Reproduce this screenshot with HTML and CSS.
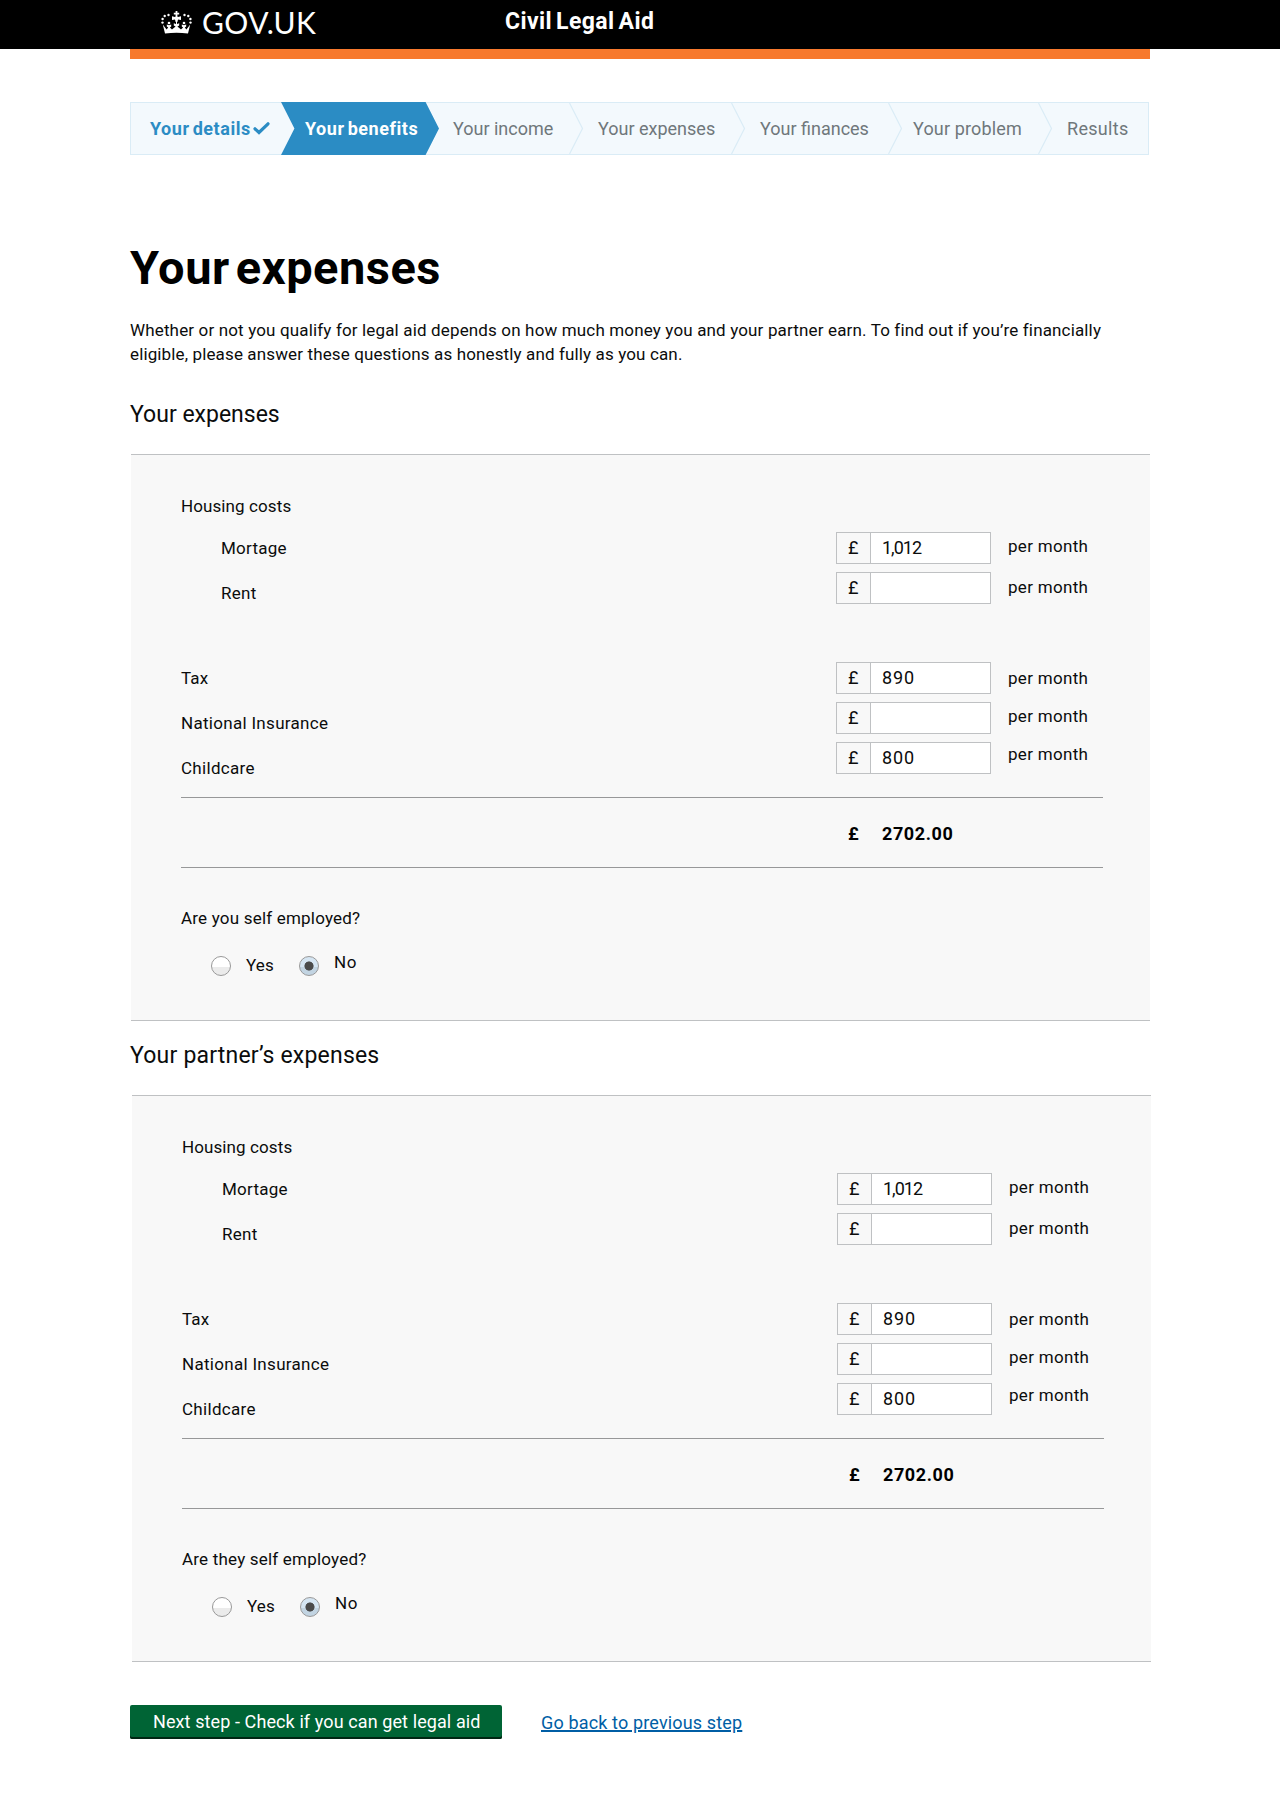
FILE: index.html
```html
<!DOCTYPE html>
<html lang="en">
<head>
<meta charset="utf-8">
<title>Civil Legal Aid - Your expenses</title>
<link rel="stylesheet" href="styles.css">
</head>
<body>
<header class="masthead">
  <div class="masthead-inner">
    <a class="logo">
      <svg class="crown" width="31" height="23" viewBox="0 0 31 23" fill="#fff">
        <path d="M4 22.600L1.800 13.600L5.600 18.600L7.200 16.400L5.800 15.600V13.400L8 14.200L10.200 13.400V15.600L8.900 16.400L11 18.400L14.600 15.400L12.800 14.400V12.200L15 13V9.600H16V13L18.200 12.200V14.400L16.400 15.400L20 18.400L22.100 16.400L20.800 15.600V13.400L23 14.200L25.200 13.400V15.600L23.800 16.400L25.400 18.600L29.200 13.600L27 22.600Q15.500 20.800 4 22.600Z"/>
        <path d="M14.600 0H16.400V1.800H18.200V3.600H16.400V5.200H14.600V3.600H12.800V1.800H14.600Z"/>
        <path d="M15.500 4.600L17 6L20 5.200V9L17 8.400L16.400 11H14.600L14 8.400L11 9V5.200L14 6Z"/>
        <circle cx="7.500" cy="4" r="1.200"/><circle cx="23.500" cy="4" r="1.200"/>
        <circle cx="3.700" cy="5" r="1.200"/><circle cx="27.300" cy="5" r="1.200"/>
        <circle cx="1.600" cy="8" r="1.200"/><circle cx="29.400" cy="8" r="1.200"/>
        <circle cx="1.500" cy="11.600" r="1.200"/><circle cx="29.500" cy="11.600" r="1.200"/>
        <circle cx="8" cy="12" r="1.300"/><circle cx="23" cy="12" r="1.300"/>
      </svg>
      <span class="logo-text">GOV.UK</span>
    </a>
    <span class="service">Civil Legal Aid</span>
  </div>
</header>
<div class="page">
  <div class="accent"></div>
  <ol class="steps">
    <li class="step done">Your details<svg class="tick" width="17" height="13" viewBox="0 0 17 13"><path d="M2 6.800L6 10.500L15 1.800" fill="none" stroke="#2b8cc4" stroke-width="3.200" stroke-linecap="round"/></svg></li>
    <li class="step current">Your benefits</li>
    <li class="step income">Your income<svg class="chevron" width="15" height="51" viewBox="0 0 15 51"><path d="M.5 0L13.500 25.500L.5 51"/></svg></li>
    <li class="step expenses">Your expenses<svg class="chevron" width="15" height="51" viewBox="0 0 15 51"><path d="M.5 0L13.500 25.500L.5 51"/></svg></li>
    <li class="step finances">Your finances<svg class="chevron" width="15" height="51" viewBox="0 0 15 51"><path d="M.5 0L13.500 25.500L.5 51"/></svg></li>
    <li class="step problem">Your problem<svg class="chevron" width="15" height="51" viewBox="0 0 15 51"><path d="M.5 0L13.500 25.500L.5 51"/></svg></li>
    <li class="step results">Results</li>
  </ol>
  <h1>Your expenses</h1>
  <p class="intro"><span class="intro-first">Whether or not you qualify for legal aid depends on how much money you and your partner earn. To find out if you’re financially</span><br>eligible, please answer these questions as honestly and fully as you can.</p>

  <h2>Your expenses</h2>
  <section class="panel">
    <div class="costs">
      <div class="labels">
        <div class="label">Housing costs</div>
        <div class="label nested">Mortage</div>
        <div class="label nested">Rent</div>
        <div class="label group">Tax</div>
        <div class="label wide">National Insurance</div>
        <div class="label wide">Childcare</div>
      </div>
      <div class="fields">
        <div class="money"><span>£</span><b class="one">1,012</b></div>
        <div class="money"><span>£</span><b></b></div>
        <div class="money group"><span>£</span><b>890</b></div>
        <div class="money"><span>£</span><b></b></div>
        <div class="money"><span>£</span><b>800</b></div>
      </div>
      <div class="units">
        <div>per month</div>
        <div>per month</div>
        <div>per month</div>
        <div>per month</div>
        <div>per month</div>
      </div>
    </div>
    <div class="total"><span>£</span><span class="sum">2702.00</span></div>
    <div class="question">Are you self employed?</div>
    <div class="choices">
      <span class="radio"></span><span class="yes">Yes</span>
      <span class="radio on"></span><span class="no">No</span>
    </div>
  </section>

  <h2 class="partner">Your partner’s expenses</h2>
  <section class="panel shifted">
    <div class="costs">
      <div class="labels">
        <div class="label">Housing costs</div>
        <div class="label nested">Mortage</div>
        <div class="label nested">Rent</div>
        <div class="label group">Tax</div>
        <div class="label wide">National Insurance</div>
        <div class="label wide">Childcare</div>
      </div>
      <div class="fields">
        <div class="money"><span>£</span><b class="one">1,012</b></div>
        <div class="money"><span>£</span><b></b></div>
        <div class="money group"><span>£</span><b>890</b></div>
        <div class="money"><span>£</span><b></b></div>
        <div class="money"><span>£</span><b>800</b></div>
      </div>
      <div class="units">
        <div>per month</div>
        <div>per month</div>
        <div>per month</div>
        <div>per month</div>
        <div>per month</div>
      </div>
    </div>
    <div class="total"><span>£</span><span class="sum">2702.00</span></div>
    <div class="question">Are they self employed?</div>
    <div class="choices">
      <span class="radio"></span><span class="yes">Yes</span>
      <span class="radio on"></span><span class="no">No</span>
    </div>
  </section>

  <div class="actions">
    <a class="button">Next step - Check if you can get legal aid</a>
    <a class="back">Go back to previous step</a>
  </div>
</div>
</body>
</html>
```
FILE: styles.css
```css
* { box-sizing: border-box; }
body {
  margin: 0;
  min-height: 1800px;
  background: #fff;
  color: #0b0c0c;
  font: 17px/24px Roboto, "Liberation Sans", sans-serif;
  white-space: nowrap;
}
.masthead { height: 49px; background: #000; color: #fff; }
.masthead-inner { display: flex; width: 1020px; margin: 0 auto; padding-left: 31px; }
.logo { display: flex; width: 344px; padding-top: 11px; }
.logo-text { margin: -1px 0 0 10px; font: 30px/24px Lato, sans-serif; letter-spacing: 0.4px; }
.service { padding-top: 8px; font-size: 23px; line-height: 28px; font-weight: 700; letter-spacing: 0.4px; word-spacing: -2px; }
.page { width: 1020px; margin: 0 auto; }
.accent { height: 10px; background: #f7792d; }

.steps {
  display: flex;
  width: 1019px;
  height: 53px;
  margin: 43px 0 0;
  padding: 0;
  list-style: none;
  background: #f3f9fd;
  border: 1px solid #daecf6;
  font-size: 18px;
  line-height: 51px;
  color: #6f777b;
}
.step { display: flex; justify-content: space-between; }
.done { width: 150px; padding-left: 19px; justify-content: flex-start; color: #2b8cc4; font-weight: 700; letter-spacing: 0.55px; word-spacing: -2px; }
.tick { margin: 19px 0 0 2px; }
.current {
  width: 158px;
  height: 53px;
  margin-top: -1px;
  padding-left: 24px;
  line-height: 53px;
  background: #2b8cc4;
  color: #fff;
  font-weight: 700;
  letter-spacing: 0.55px;
  word-spacing: -2px;
  clip-path: polygon(0 0, 91.500% 0, 100% 50%, 91.500% 100%, 0 100%, 8.500% 50%);
}
.income { width: 145px; padding-left: 14px; }
.expenses { width: 162px; padding-left: 14px; }
.finances { width: 157px; padding-left: 14px; }
.problem { width: 150px; padding-left: 10px; letter-spacing: 0.15px; }
.results { padding-left: 14px; letter-spacing: 0.3px; }
.chevron { fill: none; stroke: #daecf6; stroke-width: 1.200; }

h1 { margin: 68px 0 0; font-size: 47px; line-height: 90px; font-weight: 700; letter-spacing: 0.5px; word-spacing: -6px; color: #000; }
.intro { margin: 5px 0 0; letter-spacing: 0.130px; }
.intro-first { letter-spacing: 0.150px; }
h2 { margin: 22px 0 0; font-size: 23px; line-height: 54px; font-weight: 400; }
.panel {
  width: 1019px;
  height: 567px;
  margin: 12px 0 0 1px;
  padding: 0 47px 0 50px;
  background: #f8f8f8;
  border: solid #bfc1c3;
  border-width: 1px 0;
}
.costs { display: flex; height: 342px; }
.labels { width: 655px; padding-top: 39px; }
.label { margin-bottom: 21px; letter-spacing: 0.1px; }
.label:first-child { margin-bottom: 18px; }
.label.group { margin-top: 61px; }
.label.nested { padding-left: 40px; letter-spacing: 0.25px; }
.label.wide { letter-spacing: 0.3px; }
.fields { width: 172px; padding-top: 77px; }
.money { display: flex; width: 155px; height: 32px; margin-bottom: 8px; border: 1px solid #bfc1c3; line-height: 30px; }
.money.group { margin-top: 58px; }
.money span { width: 34px; padding-left: 11px; border-right: 1px solid #bfc1c3; font-size: 18px; }
.money b { flex: 1; padding-left: 11px; background: #fff; font-weight: 400; font-size: 18px; letter-spacing: 0.9px; }
.money .one { letter-spacing: -1px; }
.units { padding-top: 79px; letter-spacing: 0.3px; }
.units div { margin-bottom: 14px; }
.units div:nth-child(2) { margin: 17px 0 67px; }
.total {
  display: flex;
  width: 922px;
  height: 71px;
  padding-left: 667px;
  border: solid #979899;
  border-width: 1px 0;
  line-height: 71px;
  font-size: 18px;
  font-weight: 700;
  color: #000;
}
.total span:first-child { width: 34px; }
.sum { letter-spacing: 0.6px; }
.question { margin-top: 38px; letter-spacing: 0.2px; }
.choices { display: flex; margin: 24px 0 0 41px; height: 30px; }
.radio {
  width: 20px;
  height: 20px;
  margin-top: 2px;
  margin-left: -11px;
  border: 1px solid #999;
  border-radius: 50%;
  background: linear-gradient(#fff 55%, #ebebeb 55%);
}
.radio.on { margin-left: 0; background: radial-gradient(circle at 50% 50%, #4a4a4a 4.200px, transparent 4.900px), linear-gradient(#d5e5f2 55%, #c2d4e2 55%); }
.yes { width: 53px; margin: -1px 0 0 15px; letter-spacing: 0.2px; }
.no { margin: -4px 0 0 15px; letter-spacing: 0.7px; }
h2.partner { margin: 8px 0 0; letter-spacing: 0.2px; }
.shifted { margin: 12px 0 0 2px; }

.actions { display: flex; align-items: flex-start; margin-top: 43px; font-size: 18px; }
.button {
  width: 372px;
  height: 34px;
  padding-left: 23px;
  border-radius: 2px;
  background: #006435;
  box-shadow: inset 0 -2px 0 #002613;
  color: #fff;
  line-height: 34px;
  letter-spacing: 0.1px;
}
.back { margin: 6px 0 0 39px; color: #005ea5; text-decoration: underline; text-decoration-thickness: 2px; letter-spacing: 0.150px; }
```
